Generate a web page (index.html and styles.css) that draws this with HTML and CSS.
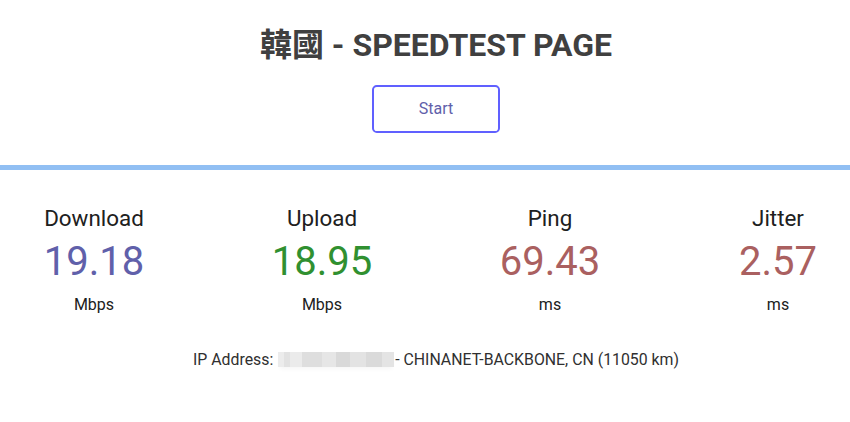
FILE: index.html
```html
<!DOCTYPE html>
<html lang="zh-Hant">
<head>
<meta charset="utf-8">
<title>韓國 - SPEEDTEST PAGE</title>
<link rel="stylesheet" href="styles.css">
</head>
<body>
<header class="head">
  <h1 class="title">韓國 - SPEEDTEST PAGE</h1>
  <div class="btn">Start</div>
</header>
<div class="bar"></div>
<section class="tests">
  <div class="grid">
    <div class="area">
      <div class="name">Download</div>
      <div class="meter dl">19.18</div>
      <div class="unit">Mbps</div>
    </div>
    <div class="area">
      <div class="name">Upload</div>
      <div class="meter ul">18.95</div>
      <div class="unit">Mbps</div>
    </div>
    <div class="area">
      <div class="name">Ping</div>
      <div class="meter ping">69.43</div>
      <div class="unit">ms</div>
    </div>
    <div class="area">
      <div class="name">Jitter</div>
      <div class="meter ping">2.57</div>
      <div class="unit">ms</div>
    </div>
  </div>
  <div class="ip">IP Address: <span class="blur"></span>- CHINANET-BACKBONE, CN (11050 km)</div>
</section>
</body>
</html>
```

FILE: styles.css
```css
html, body {
  margin: 0;
  padding: 0;
  overflow: hidden;
  background: #ffffff;
}
body {
  font-family: Roboto, "Noto Sans CJK TC", sans-serif;
  text-align: center;
  color: #202020;
  width: 850px;
  height: 422px;
}
.head {
  padding-left: 22px;
  padding-top: 26px;
  display: flex;
  flex-direction: column;
  align-items: center;
}
.title {
  margin: 0;
  font-size: 32px;
  font-weight: 700;
  line-height: 38px;
  color: #404040;
}
.btn {
  margin-top: 21px;
  box-sizing: border-box;
  width: 128px;
  height: 48px;
  border: 2.4px solid #6060ff;
  border-radius: 4.8px;
  color: #6060aa;
  font-size: 16px;
  line-height: 43px;
}
.bar {
  margin-top: 32px;
  height: 5px;
  background: #91bff3;
}
.tests {
  padding-left: 22px;
}
.grid {
  margin-top: 35px;
  display: flex;
  justify-content: center;
  gap: 4px;
}
.area {
  flex: 0 0 224px;
  width: 224px;
  display: flex;
  flex-direction: column;
  align-items: center;
}
.name {
  font-size: 22.4px;
  line-height: 26px;
  color: #202020;
}
.meter {
  margin-top: 7px;
  font-size: 40px;
  line-height: 47px;
}
.dl { color: #6060aa; }
.ul { color: #309030; }
.ping { color: #aa6060; }
.unit {
  margin-top: 10px;
  font-size: 16px;
  line-height: 19px;
  color: #202020;
}
.ip {
  margin-top: 36px;
  font-size: 15.85px;
  line-height: 19px;
  color: #303030;
}
.blur {
  display: inline-block;
  width: 116px;
  height: 15px;
  vertical-align: -2px;
  margin-left: 1px;
  margin-right: 1px;
  background: linear-gradient(90deg, #ececec 0, #ececec 6px, #e2e2e2 6px, #e2e2e2 12px, #ebebeb 12px, #ebebeb 24px, #dedede 24px, #dedede 44px, #e6e6e6 44px, #e6e6e6 58px, #d9d9d9 58px, #d9d9d9 72px, #e3e3e3 72px, #e3e3e3 88px, #dadada 88px, #dadada 104px, #e4e4e4 104px, #e4e4e4 116px);
  box-shadow: 0 4px 4px -2px rgba(0,0,0,0.04);
}
```
